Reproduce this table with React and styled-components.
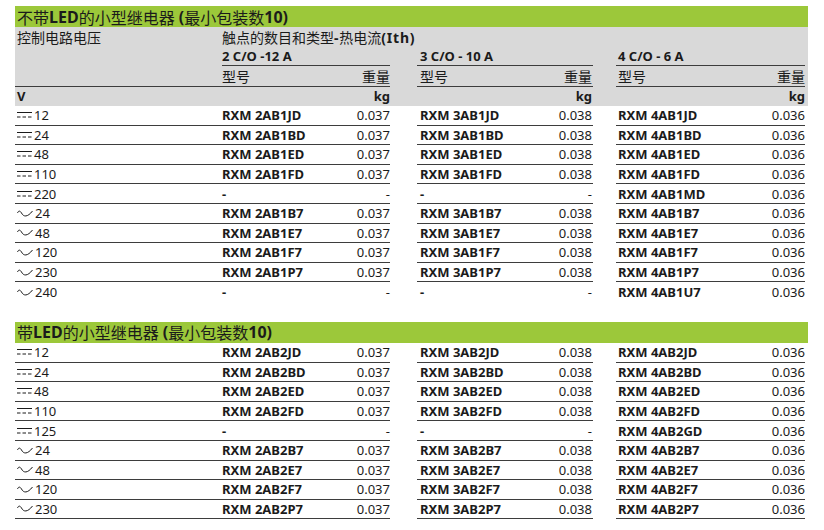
import React from 'react';
import styled, { createGlobalStyle } from 'styled-components';

const Global = createGlobalStyle`
  body {
    margin: 0;
    background: #fff;
    font-family: "Noto Sans", "Noto Sans CJK SC", sans-serif;
    color: #1b1b1b;
  }
`;

const Page = styled.div`
  width: 793px;
  margin: 6px 0 0 15px;
`;

const Section = styled.section`
  margin-top: ${({ first }) => (first ? '0' : '20px')};
`;

const TitleBar = styled.div`
  height: 21px;
  background: #9cc83a;
  padding-left: 2px;
  display: flex;
  align-items: center;
  font-size: 16px;
  font-weight: 400;
  white-space: pre;
`;

const B = styled.b`
  font-weight: 700;
  letter-spacing: ${({ wide }) => (wide ? '0.8px' : '0')};
`;

const HeadBlock = styled.div`
  background: #d9d9d9;
`;

const Row = styled.div`
  display: grid;
  grid-template-columns: 207px 168px 27px 176px 23px 189px;
  height: ${({ h }) => h || 19.6}px;
  font-size: 13px;
`;

const Cell = styled.div`
  display: flex;
  align-items: center;
  justify-content: space-between;
  box-sizing: border-box;
  padding: ${({ pad }) => pad || '0'};
  border-bottom: ${({ line }) => (line ? '1px solid #3d3d3d' : 'none')};
  font-size: ${({ big }) => (big ? '14px' : '13px')};
  font-weight: ${({ bold }) => (bold ? 700 : 400)};
  white-space: nowrap;
`;

const SpanCell = styled(Cell)`
  grid-column: 2 / span 3;
`;

const Model = styled.span`
  font-weight: 700;
`;

const Volt = styled.span`
  display: flex;
  align-items: center;
  gap: 2px;
`;

const Dc = () => (
  <svg width="15" height="8" viewBox="0 0 15 8">
    <line x1="0" y1="1.5" x2="15" y2="1.5" stroke="#1b1b1b" strokeWidth="1" />
    <line x1="0" y1="6" x2="15" y2="6" stroke="#1b1b1b" strokeWidth="1" strokeDasharray="3.5 2" />
  </svg>
);

const Ac = () => (
  <svg width="16" height="9" viewBox="0 0 16 9">
    <path d="M0.5 4 C1.5 1.5 3 1.5 4.5 4 C6.5 8 10.5 8.5 15.5 2" fill="none" stroke="#1b1b1b" strokeWidth="1" />
  </svg>
);

const pads = ['0', '0 1px 0 3px', '0 0 0 2px'];

const GroupCell = ({ idx, left, right, line, bold, big }) => (
  <Cell pad={pads[idx]} line={line} bold={bold} big={big}>
    <span>{left}</span>
    <span>{right}</span>
  </Cell>
);

const Header = () => (
  <HeadBlock>
    <Row h={20}>
      <Cell big pad="0 0 0 2px">控制电路电压</Cell>
      <SpanCell big>
        <span>触点的数目和类型<B wide>-</B>热电流<B wide>(Ith)</B></span>
      </SpanCell>
    </Row>
    <Row h={19}>
      <Cell />
      {['2 C/O -12 A', '3 C/O - 10 A', '4 C/O - 6 A'].flatMap((t, i) => [
        <GroupCell key={'g' + i} idx={i} left={t} line bold />,
        i < 2 ? <Cell key={'s' + i} /> : null,
      ])}
    </Row>
    <Row h={20}>
      <Cell line />
      {[0, 1, 2].flatMap((i) => [
        <GroupCell key={'g' + i} idx={i} left="型号" right="重量" line big />,
        i < 2 ? <Cell key={'s' + i} /> : null,
      ])}
    </Row>
    <Row h={20}>
      <Cell bold pad="0 0 0 2px">V</Cell>
      {[0, 1, 2].flatMap((i) => [
        <GroupCell key={'g' + i} idx={i} right="kg" bold />,
        i < 2 ? <Cell key={'s' + i} /> : null,
      ])}
    </Row>
  </HeadBlock>
);

const DataRow = ({ row, line }) => (
  <Row>
    <Cell line={line} pad="0 0 0 2px">
      <Volt>
        {row.ac ? <Ac /> : <Dc />}
        {row.v}
      </Volt>
    </Cell>
    {row.items.flatMap(([m, w], i) => [
      <Cell key={'g' + i} pad={pads[i]} line={line}>
        <Model>{m}</Model>
        <span>{w}</span>
      </Cell>,
      i < 2 ? <Cell key={'s' + i} /> : null,
    ])}
  </Row>
);

// empty: 2 and 3 pole relays don't exist for this voltage
const mk = (code, ac, v, empty, led) => {
  const L = led ? '2' : '1';
  const c = (n, w) => (empty ? ['-', '-'] : [`RXM ${n}AB${L}${code}`, w]);
  const items = [c(2, '0.037'), c(3, '0.038'), [`RXM 4AB${L}${code}`, '0.036']];
  return { ac, v, items };
};

const section1 = [
  mk('JD', false, '12'),
  mk('BD', false, '24'),
  mk('ED', false, '48'),
  mk('FD', false, '110'),
  mk('MD', false, '220', true),
  mk('B7', true, '24'),
  mk('E7', true, '48'),
  mk('F7', true, '120'),
  mk('P7', true, '230'),
  mk('U7', true, '240', true),
];

const section2 = [
  mk('JD', false, '12', false, true),
  mk('BD', false, '24', false, true),
  mk('ED', false, '48', false, true),
  mk('FD', false, '110', false, true),
  mk('GD', false, '125', true, true),
  mk('B7', true, '24', false, true),
  mk('E7', true, '48', false, true),
  mk('F7', true, '120', false, true),
  mk('P7', true, '230', false, true),
];

const App = () => (
  <Page>
    <Global />
    <Section first>
      <TitleBar>
        不带<B>LED</B>的小型继电器 <B>(</B>最小包装数<B>10)</B>
      </TitleBar>
      <Header />
      {section1.map((r, i) => (
        <DataRow key={i} row={r} line={i < section1.length - 1} />
      ))}
    </Section>
    <Section>
      <TitleBar>
        带<B>LED</B>的小型继电器 <B>(</B>最小包装数<B>10)</B>
      </TitleBar>
      {section2.map((r, i) => (
        <DataRow key={i} row={r} line />
      ))}
    </Section>
  </Page>
);

export default App;
